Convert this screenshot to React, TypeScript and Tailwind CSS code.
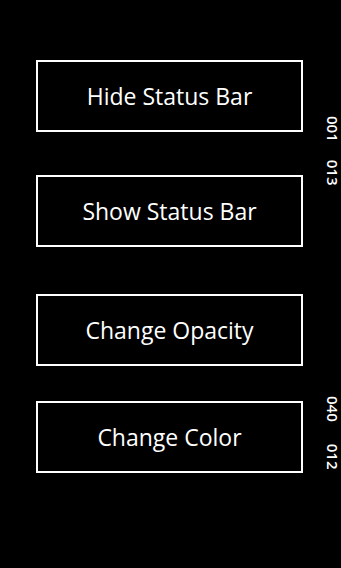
export default function App() {
  const buttons = [
    { label: "Hide Status Bar", mt: "mt-[60px]" },
    { label: "Show Status Bar", mt: "mt-[43px]" },
    { label: "Change Opacity", mt: "mt-[47px]" },
    { label: "Change Color", mt: "mt-[35px]" },
  ];

  return (
    <div
      className="relative h-[568px] w-[341px] overflow-hidden bg-black text-white"
      style={{ fontFamily: '"Open Sans", "Noto Sans", sans-serif' }}
    >
      <div className="flex flex-col">
        {buttons.map((b) => (
          <button
            key={b.label}
            className={`${b.mt} ml-[36px] flex h-[72px] w-[267px] items-center justify-center border-2 border-white text-[23px] font-medium text-white`}
          >
            {b.label}
          </button>
        ))}
      </div>

      {/* frame counters, rotated */}
      <div className="absolute left-[339px] top-[116px] flex origin-top-left rotate-90 gap-[18px] whitespace-nowrap text-[15px] font-semibold leading-[12px]">
        <span>001</span>
        <span>013</span>
      </div>
      <div className="absolute left-[339px] top-[396px] flex origin-top-left rotate-90 gap-[22px] whitespace-nowrap text-[15px] font-semibold leading-[12px]">
        <span>040</span>
        <span>012</span>
      </div>
    </div>
  );
}
